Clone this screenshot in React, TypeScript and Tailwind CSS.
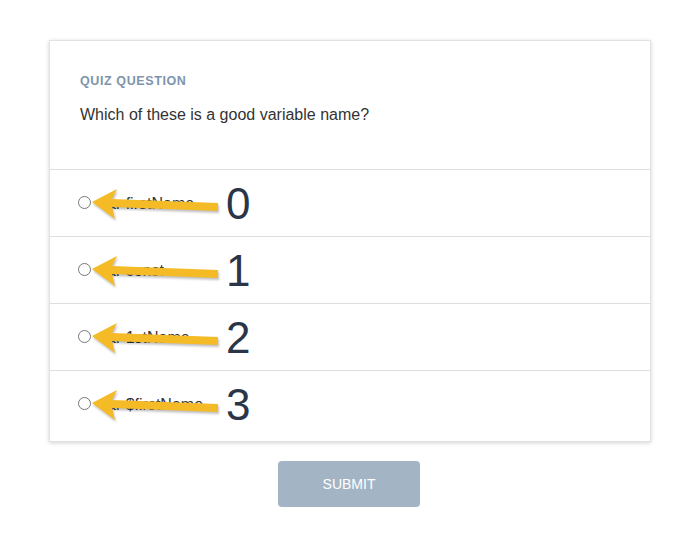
import React from 'react';

const options = ['var firstName', 'var const', 'var 1stName', 'var $firstName'];

const Arrow: React.FC = () => (
  <svg
    className="absolute left-[38px] top-[16px] drop-shadow-[1px_2px_1px_rgba(0,0,0,0.25)]"
    width="138"
    height="38"
    viewBox="0 0 138 38"
  >
    <polygon points="4,16 29,3 24,13 130,17 130,25 24,21 27,33" fill="#f4bb26" />
  </svg>
);

const App: React.FC = () => {
  return (
    <div className="min-h-screen bg-white font-['Liberation_Sans',Arial,sans-serif] pt-[40px]">
      {/* Card */}
      <div className="mx-[49px] w-[602px] bg-white border border-[#e2e2e2] shadow-[0_1px_4px_rgba(0,0,0,0.18)]">
        {/* Header */}
        <div className="h-[128px] px-[30px] pt-[31px]">
          <p className="text-[12.5px] font-bold uppercase tracking-[0.6px] text-[#7d94ab]">Quiz Question</p>
          <p className="mt-[12px] text-[16px] text-[#333]">Which of these is a good variable name?</p>
        </div>

        {/* Options */}
        {options.map((opt, i) => (
          <div
            key={opt}
            className={`relative flex items-center gap-[8px] border-t border-[#dedede] px-[28px] ${i === options.length - 1 ? 'h-[71px] pb-[6px]' : 'h-[67px] pb-[2px]'}`}
          >
            <span className="block h-[13px] w-[13px] shrink-0 rounded-full border border-[#767676] bg-white" />
            <span className="pt-[4px] text-[16px] leading-none text-[#333]">{opt}</span>
            <Arrow />
            <span className="absolute left-[176px] top-[12px] text-[44px] leading-none text-[#2a3547]">{i}</span>
          </div>
        ))}
      </div>

      {/* Submit */}
      <div className="mt-[19px] flex justify-center">
        <button className="h-[46px] w-[142px] rounded-[4px] bg-[#a3b4c4] text-[14px] text-white">SUBMIT</button>
      </div>
    </div>
  );
};

export default App;
